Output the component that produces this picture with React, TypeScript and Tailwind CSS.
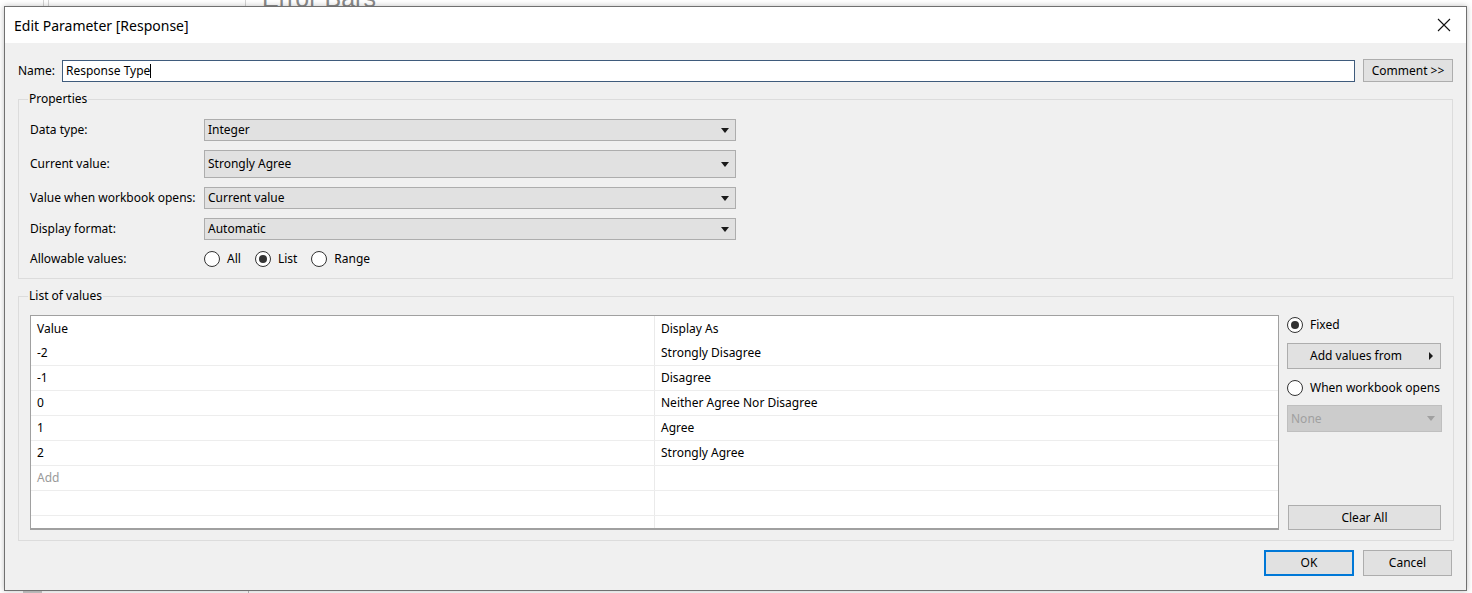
import React from 'react';

const rows = [
  { value: '-2', label: 'Strongly Disagree' },
  { value: '-1', label: 'Disagree' },
  { value: '0', label: 'Neither Agree Nor Disagree' },
  { value: '1', label: 'Agree' },
  { value: '2', label: 'Strongly Agree' },
];

function Caret({ className = 'border-t-[#1a1a1a]' }: { className?: string }) {
  return <span className={`w-0 h-0 border-x-[4px] border-x-transparent border-t-[5px] ${className}`} />;
}

function Dropdown({ text, tall = false }: { text: string; tall?: boolean }) {
  return (
    <div
      className={`w-[532px] ${tall ? 'h-[28px]' : 'h-[22px]'} flex items-center justify-between pl-[3px] pr-[6px] bg-[#e1e1e1] border border-[#adadad]`}
    >
      <span>{text}</span>
      <Caret />
    </div>
  );
}

function Radio({ checked, label }: { checked?: boolean; label: string }) {
  return (
    <div className="flex items-center gap-[7px]">
      <span className="w-[16px] h-[16px] rounded-full border border-[#333333] bg-white flex items-center justify-center">
        {checked && <span className="w-[8px] h-[8px] rounded-full bg-[#333333]" />}
      </span>
      <span>{label}</span>
    </div>
  );
}

function Button({
  children,
  className = '',
  border = 'border border-[#adadad]',
}: {
  children: React.ReactNode;
  className?: string;
  border?: string;
}) {
  return <div className={`flex items-center justify-center bg-[#e1e1e1] ${border} ${className}`}>{children}</div>;
}

function Group({ title, children, className = '' }: { title: string; children: React.ReactNode; className?: string }) {
  return (
    <fieldset className={`border border-[#dcdcdc] ${className}`}>
      <legend className="-ml-[2px] px-[1px] leading-[16px]">{title}</legend>
      {children}
    </fieldset>
  );
}

export default function App() {
  return (
    <div className="relative w-[1472px] h-[593px] overflow-hidden bg-white text-[12px] text-black font-['Noto_Sans','Open_Sans',sans-serif]">
      {/* app behind the dialog */}
      <div className="absolute left-[43px] top-0 w-px h-[6px] bg-[#d4d4d4]" />
      <div className="absolute left-[48px] top-0 w-px h-[6px] bg-[#d4d4d4]" />
      <div className="absolute left-[245px] top-0 w-px h-[6px] bg-[#d4d4d4]" />
      <div className="absolute left-[262px] -top-[14px] text-[25px] leading-[25px] text-[#8a8a8a] font-['Liberation_Sans',sans-serif]">
        Error Bars
      </div>
      <div className="absolute left-[23px] top-[591px] w-[19px] h-[2px] bg-[#c8c8c8]" />
      <div className="absolute left-[248px] top-[591px] w-px h-[2px] bg-[#bdbdbd]" />

      {/* dialog */}
      <div className="absolute left-[4px] top-[6px] w-[1463px] h-[585px] flex flex-col border border-[#707070] shadow-[0_0_6px_rgba(0,0,0,0.25)]">
        <div className="h-[36px] shrink-0 bg-white flex items-center justify-between pl-[9px] pr-[14px]">
          <span className="text-[14px]">Edit Parameter [Response]</span>
          <svg width="14" height="14" viewBox="0 0 14 14" className="mr-[1px]">
            <path d="M1 1L13 13M13 1L1 13" stroke="#111" strokeWidth="1.1" />
          </svg>
        </div>

        <div className="flex-1 flex flex-col bg-[#f0f0f0] px-[13px] pt-[16px]">
          <div className="flex items-center">
            <span className="w-[44px]">Name:</span>
            <div className="flex-1 h-[22px] flex items-center pl-[3px] bg-white border border-[#3f5b7c]">
              <span>Response Type</span>
              <span className="w-px h-[14px] bg-black" />
            </div>
            <Button className="ml-[8px] w-[90px] h-[23px]">Comment &gt;&gt;</Button>
          </div>

          <Group title="Properties" className="mt-[9px] pl-[11px] pr-[11px] pb-[10px]">
            <div className="flex flex-col gap-[9px] pt-[12px]">
              <div className="flex items-center">
                <span className="w-[174px]">Data type:</span>
                <Dropdown text="Integer" />
              </div>
              <div className="flex items-center">
                <span className="w-[174px]">Current value:</span>
                <Dropdown text="Strongly Agree" tall />
              </div>
              <div className="flex items-center">
                <span className="w-[174px]">Value when workbook opens:</span>
                <Dropdown text="Current value" />
              </div>
              <div className="flex items-center">
                <span className="w-[174px]">Display format:</span>
                <Dropdown text="Automatic" />
              </div>
              <div className="flex items-center h-[18px] mt-[1px]">
                <span className="w-[174px]">Allowable values:</span>
                <div className="flex items-center gap-[14px]">
                  <Radio label="All" />
                  <Radio label="List" checked />
                  <Radio label="Range" />
                </div>
              </div>
            </div>
          </Group>

          <Group title="List of values" className="mt-[9px] pl-[11px] pr-[11px] pb-[10px]">
            <div className="flex gap-[8px] pt-[11px]">
              <div className="w-[1249px] h-[215px] overflow-hidden bg-white border border-[#a0a0a0] border-b-2">
                <div className="grid grid-cols-[623px_1px_1fr]">
                  <div className="h-[25px] flex items-center pl-[6px]">Value</div>
                  <div className="bg-[#eaeaea]" />
                  <div className="h-[25px] flex items-center pl-[6px]">Display As</div>
                </div>
                {rows.map((r) => (
                  <div key={r.value} className="grid grid-cols-[623px_1px_1fr] border-b border-[#ededed]">
                    <div className="h-[24px] flex items-center pl-[6px]">{r.value}</div>
                    <div className="bg-[#eaeaea]" />
                    <div className="h-[24px] flex items-center pl-[6px]">{r.label}</div>
                  </div>
                ))}
                <div className="grid grid-cols-[623px_1px_1fr] border-b border-[#ededed]">
                  <div className="h-[24px] flex items-center pl-[6px] text-[#9a9a9a]">Add</div>
                  <div className="bg-[#eaeaea]" />
                  <div className="h-[24px]" />
                </div>
                {[0, 1].map((i) => (
                  <div key={i} className="grid grid-cols-[623px_1px_1fr] border-b border-[#ededed]">
                    <div className="h-[24px]" />
                    <div className="bg-[#eaeaea]" />
                    <div className="h-[24px]" />
                  </div>
                ))}
              </div>

              <div className="w-[155px] flex flex-col">
                <div className="mt-[1px]">
                  <Radio label="Fixed" checked />
                </div>
                <Button className="mt-[9px] w-[154px] h-[26px] relative">
                  <span className="pr-[16px]">Add values from</span>
                  <span className="absolute right-[7px] top-[8px] w-0 h-0 border-y-[4px] border-y-transparent border-l-[4px] border-l-[#1a1a1a]" />
                </Button>
                <div className="mt-[10px]">
                  <Radio label="When workbook opens" />
                </div>
                <div className="mt-[8px] w-[155px] h-[27px] flex items-center justify-between pl-[3px] pr-[6px] bg-[#cccccc] border border-[#bfbfbf] text-[#a0a0a0]">
                  <span>None</span>
                  <Caret className="border-t-[#a0a0a0]" />
                </div>
                <Button className="mt-auto w-[153px] h-[25px] ml-[1px]">Clear All</Button>
              </div>
            </div>
          </Group>

          <div className="flex justify-end gap-[9px] mt-[9px] pr-[1px]">
            <Button className="w-[90px] h-[26px]" border="border-2 border-[#0078d7]">
              OK
            </Button>
            <Button className="w-[89px] h-[26px]">Cancel</Button>
          </div>
        </div>
      </div>
    </div>
  );
}
